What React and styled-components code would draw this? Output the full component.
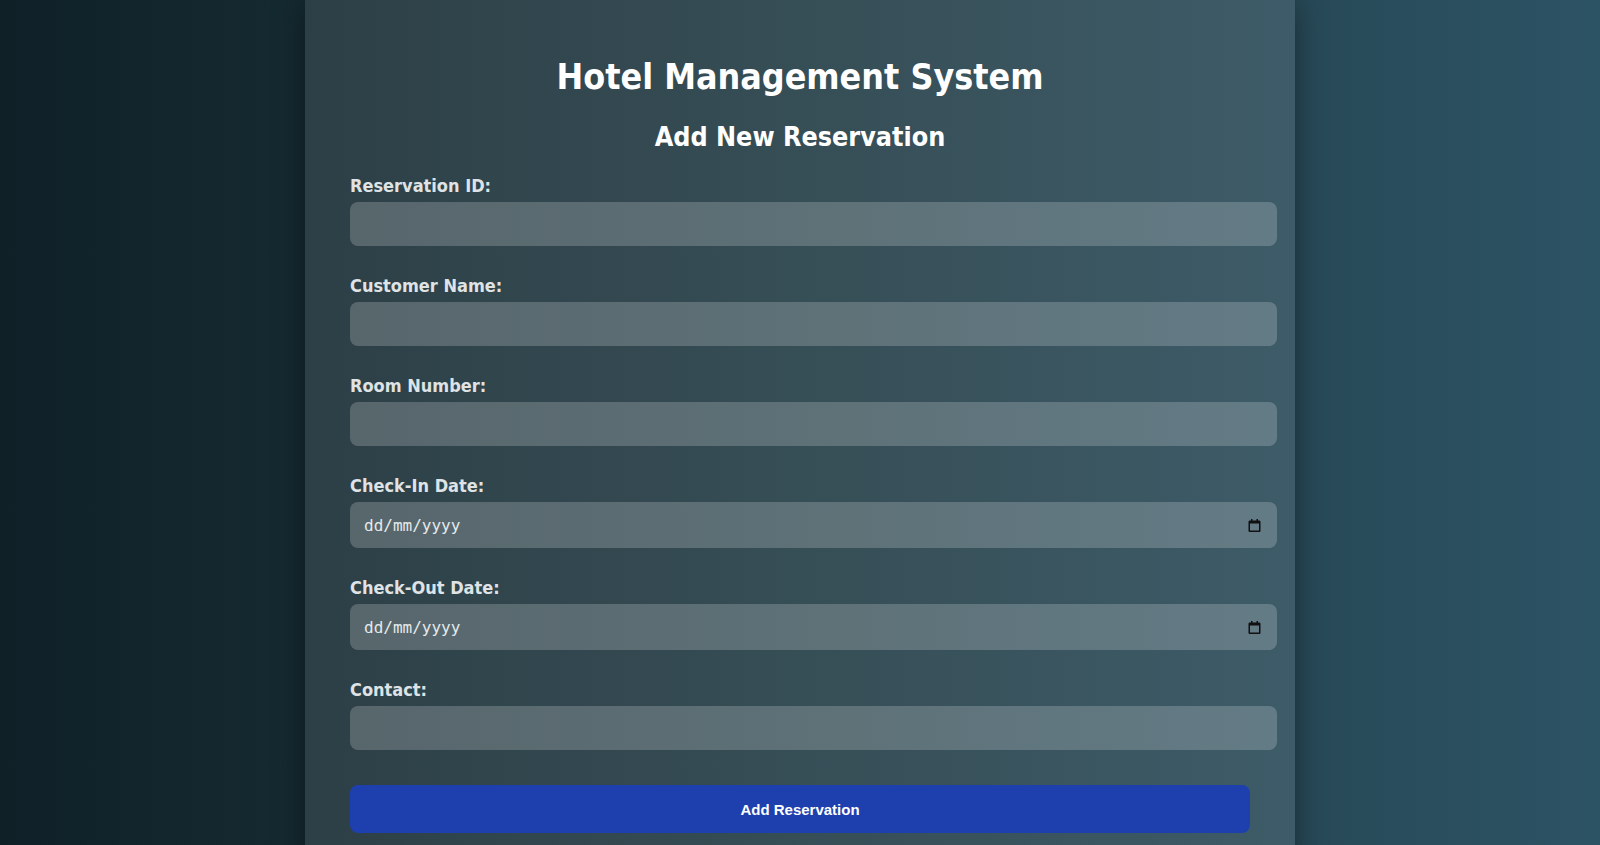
import React from 'react';
import styled, { createGlobalStyle } from 'styled-components';

//Styles

const GlobalStyle = createGlobalStyle`
  html, body {
    margin: 0;
    padding: 0;
  }
  body {
    min-height: 100vh;
    background: linear-gradient(to right, #0f2027, #203a43, #2c5364);
    background-attachment: fixed;
    font-family: 'DejaVu Sans', Verdana, sans-serif;
  }
`;

//Components

const Page = styled('div')`
  display: flex;
  justify-content: center;
  min-height: 100vh;
`;

const Card = styled('div')`
  width: 900px;
  padding: 55px 45px 40px;
  background: rgba(255, 255, 255, 0.1);
  box-shadow: 0 0 30px rgba(0, 0, 0, 0.4);
`;

const Title = styled('h1')`
  margin: 0 0 22px;
  font-size: 35.5px;
  line-height: 44px;
  font-weight: 700;
  font-stretch: condensed;
  color: #ffffff;
  text-align: center;
`;

const SubTitle = styled('h2')`
  margin: 0 0 22px;
  font-size: 26.7px;
  line-height: 32px;
  font-weight: 700;
  font-stretch: condensed;
  color: #ffffff;
  text-align: center;
`;

const Form = styled('form')`
  display: flex;
  flex-direction: column;
`;

const Group = styled('div')`
  margin-bottom: 29px;
`;

const Label = styled('label')`
  display: block;
  margin-bottom: 5px;
  font-size: 18px;
  line-height: 22px;
  font-weight: 700;
  font-stretch: condensed;
  color: #dfe3e5;
`;

const Field = styled('div')`
  display: flex;
  align-items: center;
  box-sizing: content-box;
  width: 100%;
  height: ${({ $date }) => ($date ? '46px' : '44px')};
  padding: 0 13px 0 14px;
  border-radius: 8px;
  background: rgba(255, 255, 255, 0.2);
`;

const Input = styled('input')`
  flex: 1;
  min-width: 0;
  height: 100%;
  padding: 0;
  border: none;
  background: transparent;
  color: #eef1f2;
  font-family: 'DejaVu Sans Mono', monospace;
  font-size: 16px;
  outline: none;

  &::placeholder {
    color: #e6eaeb;
    opacity: 1;
  }
`;

const CalendarIcon = styled('svg')`
  flex: none;
  width: 13px;
  height: 13px;
  margin-right: 3px;
  color: #111111;
`;

const SubmitBtn = styled('button')`
  width: 100%;
  height: 48px;
  margin-top: 6px;
  border: none;
  border-radius: 8px;
  background: #1e40af;
  color: #ffffff;
  font-family: 'Liberation Sans', Arial, sans-serif;
  font-size: 15px;
  font-weight: 700;
  cursor: pointer;
`;

const fields = [
  { id: 'reservationId', label: 'Reservation ID:' },
  { id: 'customerName', label: 'Customer Name:' },
  { id: 'roomNumber', label: 'Room Number:' },
  { id: 'checkIn', label: 'Check-In Date:', date: true },
  { id: 'checkOut', label: 'Check-Out Date:', date: true },
  { id: 'contact', label: 'Contact:' },
];

const Calendar = () => (
  <CalendarIcon viewBox="0 0 13 13" aria-hidden="true">
    <path
      fill="currentColor"
      d="M3 0h1.5v1.5h4V0H10v1.5h1.2c.7 0 1.3.6 1.3 1.3v8.9c0 .7-.6 1.3-1.3 1.3H1.8c-.7 0-1.3-.6-1.3-1.3V2.8c0-.7.6-1.3 1.3-1.3H3V0zM2 4.5v7h9v-7H2z"
    />
  </CalendarIcon>
);

const App = () => {
  return (
    <>
      <GlobalStyle />
      <Page>
        <Card>
          <Title>Hotel Management System</Title>
          <SubTitle>Add New Reservation</SubTitle>
          <Form onSubmit={(e) => e.preventDefault()}>
            {fields.map(({ id, label, date }) => (
              <Group key={id}>
                <Label htmlFor={id}>{label}</Label>
                <Field $date={date}>
                  <Input
                    id={id}
                    type="text"
                    placeholder={date ? 'dd/mm/yyyy' : ''}
                  />
                  {date && <Calendar />}
                </Field>
              </Group>
            ))}
            <SubmitBtn type="submit">Add Reservation</SubmitBtn>
          </Form>
        </Card>
      </Page>
    </>
  );
};

export default App;
